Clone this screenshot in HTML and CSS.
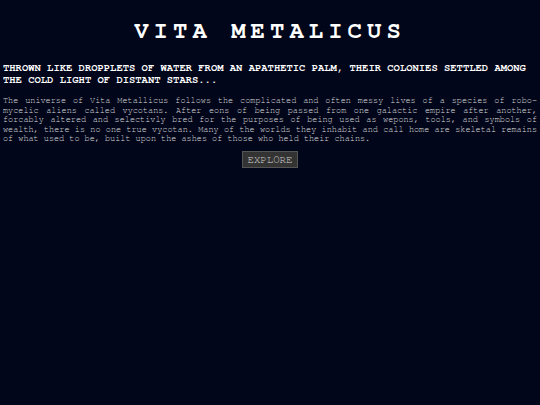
FILE: index.html
```html
<!DOCTYPE html>
<html lang="en">

<head>
    <meta charset="UTF-8">
    <meta name="viewport" content="width=device-width, initial-scale=1.0">
    <title>Vita Metalicus</title>
    <link rel="stylesheet" href="styles.css">
</head>

<body>
    <header class="header">
        <h1 class="title">VITA METALICUS</h1>
    </header>
    <main class="intro">
        <h2 class="tagline">Thrown like dropplets of water from an apathetic palm, their colonies settled among the cold light of distant stars...</h2>
        <p class="lore">The universe of Vita Metallicus follows the complicated and often messy lives of a species of robo-mycelic aliens called vycotans. After eons of being passed from one galactic empire after another, forcably altered and selectivly bred for the purposes of being used as wepons, tools, and symbols of wealth, there is no one true vycotan. Many of the worlds they inhabit and call home are skeletal remains of what used to be, built upon the ashes of those who held their chains.</p>
        <div class="actions">
            <button class="explore-btn" type="button">EXPLORE</button>
        </div>
    </main>
</body>

</html>
```

FILE: styles.css
```css
body {
    margin: 0;
    padding: 0 3px;
    background-color: #02061a;
    color: #fff;
    font-family: "Nimbus Mono PS", "Nimbus Mono L", FreeMono, Courier, "Liberation Mono", monospace;
}

.header {
    text-align: center;
    padding-top: 17px;
}

.title {
    margin: 0;
    font-size: 24px;
    letter-spacing: 5px;
    line-height: 28px;
    font-weight: bold;
}

.tagline {
    margin: 17px 0 0;
    font-size: 10.5px;
    line-height: 12px;
    font-weight: bold;
    text-transform: uppercase;
}

.lore {
    margin: 10px 0 0;
    font-size: 8.5px;
    line-height: 9.5px;
    color: #dcdcdc;
    text-align: justify;
}

.actions {
    text-align: center;
    margin-top: 6px;
}

.explore-btn {
    font-family: inherit;
    font-size: 10.7px;
    color: #d0d0d0;
    background-color: #333;
    border: 1px solid #555;
    padding: 2px 5px;
    cursor: pointer;
}
```
